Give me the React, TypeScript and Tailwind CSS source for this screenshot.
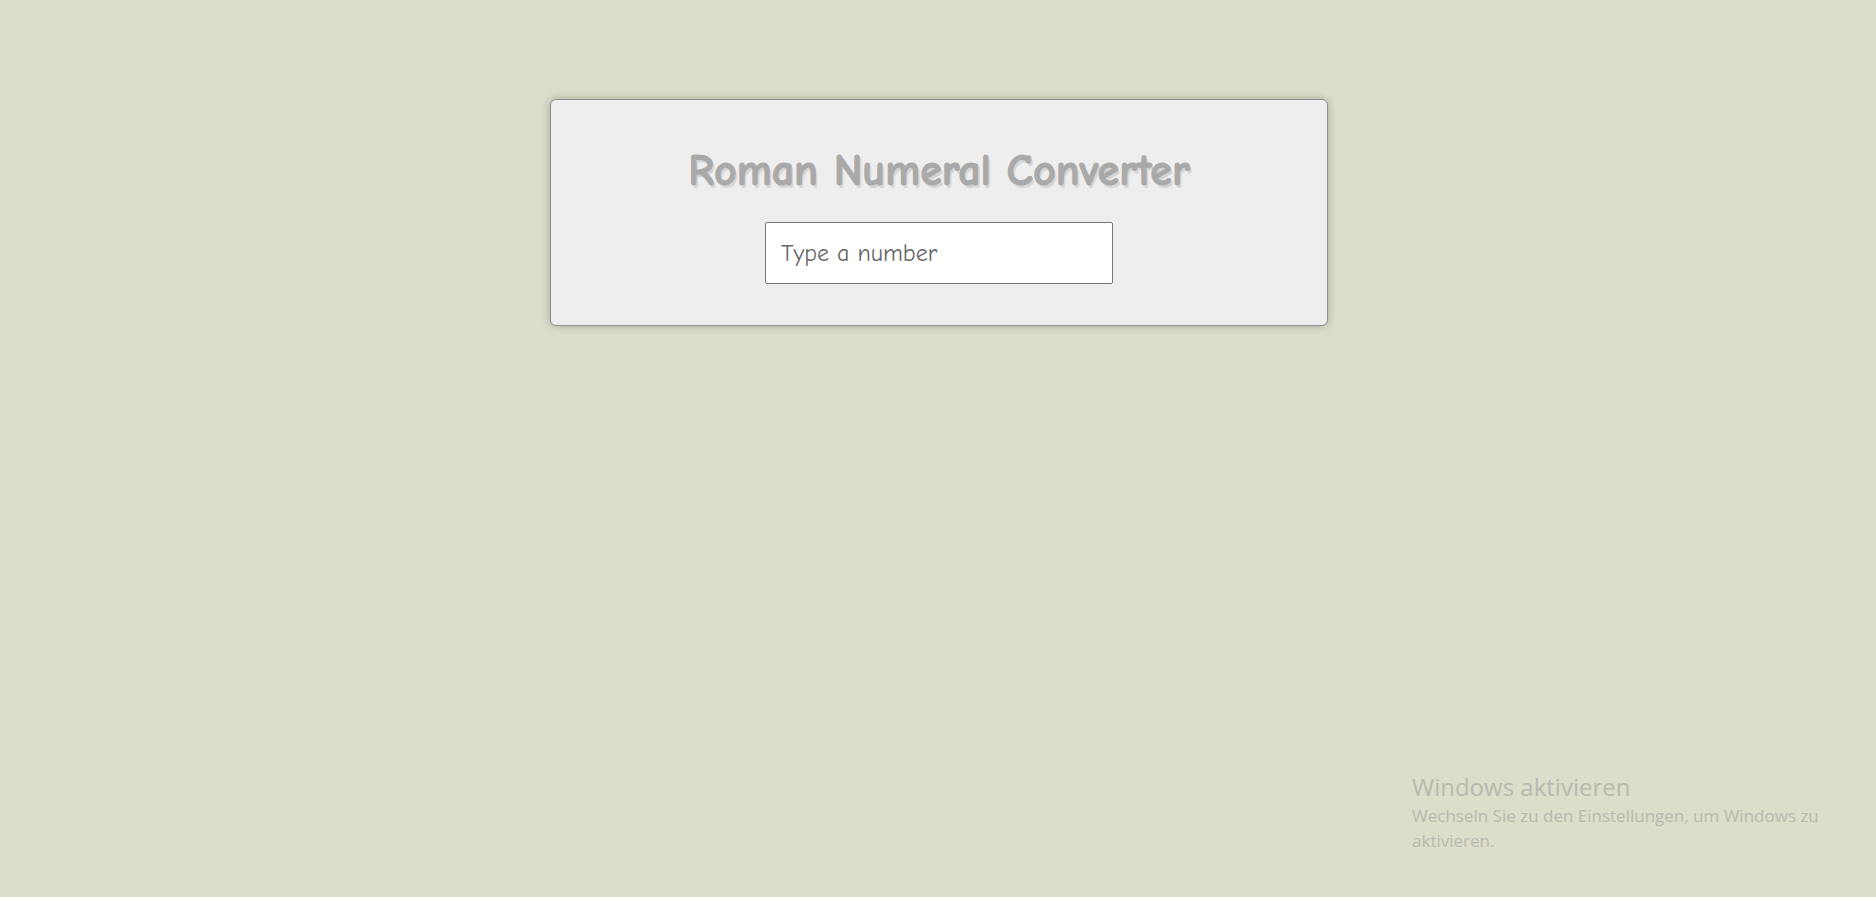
import { useState } from "react";

const NUMERALS: [number, string][] = [
  [1000, "M"],
  [900, "CM"],
  [500, "D"],
  [400, "CD"],
  [100, "C"],
  [90, "XC"],
  [50, "L"],
  [40, "XL"],
  [10, "X"],
  [9, "IX"],
  [5, "V"],
  [4, "IV"],
  [1, "I"],
];

function toRoman(value: number): string {
  let rest = value;
  let result = "";
  for (const [amount, symbol] of NUMERALS) {
    while (rest >= amount) {
      result += symbol;
      rest -= amount;
    }
  }
  return result;
}

function Converter() {
  const [text, setText] = useState("");
  const value = Number(text);
  const roman = Number.isInteger(value) && value > 0 && value < 4000 ? toRoman(value) : "";

  return (
    <main className="flex w-full max-w-[778px] flex-col items-center rounded-md border border-[#8f8f8f] bg-[#eeeeee] px-6 pt-10 pb-[41px] font-['Comic_Sans_MS','Comic_Neue','Open_Sans',sans-serif] shadow-[0_0_8px_rgba(0,0,0,0.25)]">
      <h1 className="text-center text-[44px] leading-[62px] font-bold text-[#a9a9a9] [-webkit-text-stroke:1px_#a9a9a9] [text-shadow:2px_3px_1px_#d3d3d3]">
        Roman Numeral Converter
      </h1>
      <input
        type="text"
        inputMode="numeric"
        aria-label="Number"
        placeholder="Type a number"
        value={text}
        onChange={(event) => setText(event.target.value)}
        className="mt-5 h-[62px] w-full max-w-[348px] rounded-xs border border-[#767676] bg-white px-[15px] text-2xl text-gray-800 placeholder:text-[#666666]"
      />
      {roman && <output className="mt-6 text-3xl text-[#757575]">{roman}</output>}
    </main>
  );
}

function ActivationNotice() {
  return (
    <aside className="w-full max-w-[464px] pr-8 font-['Segoe_UI','Open_Sans',sans-serif] text-[#b8b9b0]">
      <p className="text-2xl leading-8">Windows aktivieren</p>
      <p className="text-[17px] leading-[25px]">
        Wechseln Sie zu den Einstellungen, um Windows zu aktivieren.
      </p>
    </aside>
  );
}

export default function App() {
  return (
    <div className="flex min-h-screen flex-col items-center justify-between bg-[#dcddca] pt-[99px] pb-11 pl-0.5">
      <Converter />
      <div className="flex w-full justify-end">
        <ActivationNotice />
      </div>
    </div>
  );
}
